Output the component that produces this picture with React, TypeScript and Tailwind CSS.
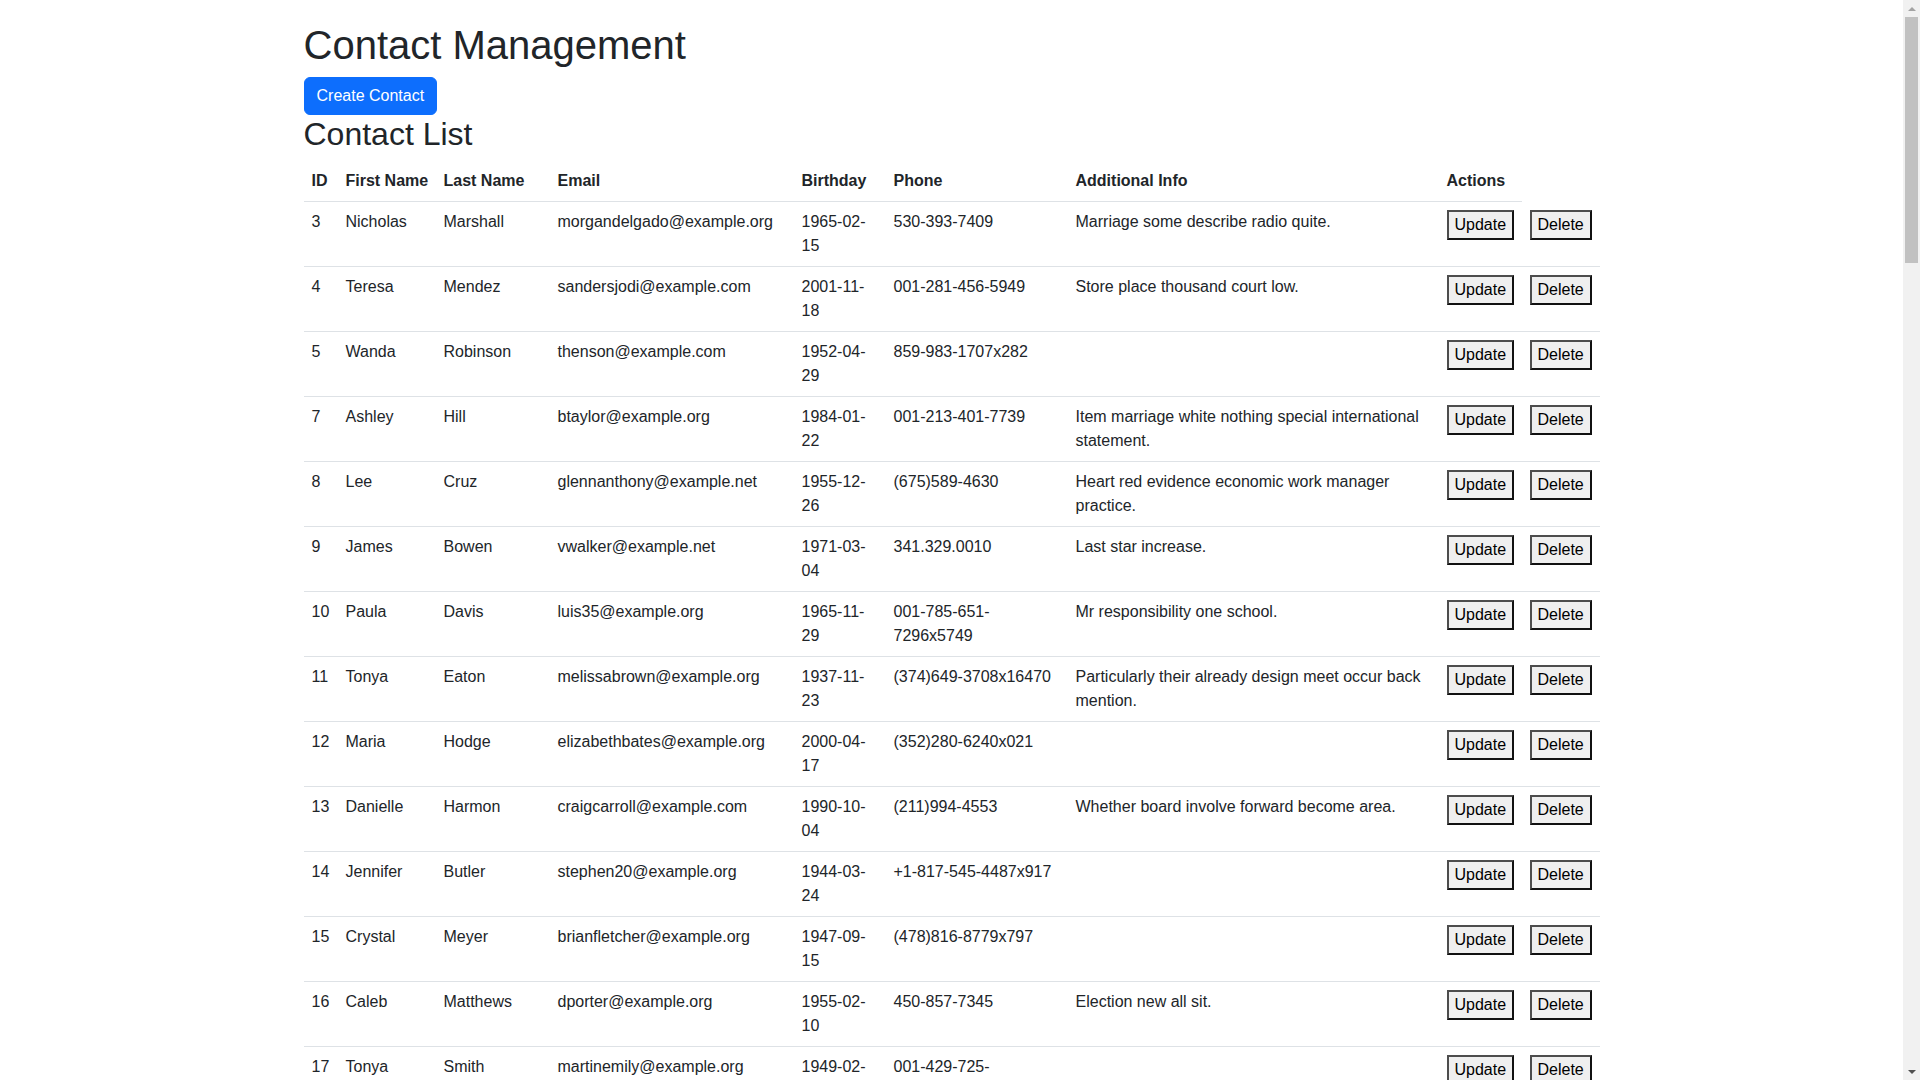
const contacts = [
  { id: 3, first: "Nicholas", last: "Marshall", email: "morgandelgado@example.org", birthday: "1965-02-15", phone: "530-393-7409", info: "Marriage some describe radio quite." },
  { id: 4, first: "Teresa", last: "Mendez", email: "sandersjodi@example.com", birthday: "2001-11-18", phone: "001-281-456-5949", info: "Store place thousand court low." },
  { id: 5, first: "Wanda", last: "Robinson", email: "thenson@example.com", birthday: "1952-04-29", phone: "859-983-1707x282", info: "" },
  { id: 7, first: "Ashley", last: "Hill", email: "btaylor@example.org", birthday: "1984-01-22", phone: "001-213-401-7739", info: "Item marriage white nothing special international statement." },
  { id: 8, first: "Lee", last: "Cruz", email: "glennanthony@example.net", birthday: "1955-12-26", phone: "(675)589-4630", info: "Heart red evidence economic work manager practice." },
  { id: 9, first: "James", last: "Bowen", email: "vwalker@example.net", birthday: "1971-03-04", phone: "341.329.0010", info: "Last star increase." },
  { id: 10, first: "Paula", last: "Davis", email: "luis35@example.org", birthday: "1965-11-29", phone: "001-785-651-7296x5749", info: "Mr responsibility one school." },
  { id: 11, first: "Tonya", last: "Eaton", email: "melissabrown@example.org", birthday: "1937-11-23", phone: "(374)649-3708x16470", info: "Particularly their already design meet occur back mention." },
  { id: 12, first: "Maria", last: "Hodge", email: "elizabethbates@example.org", birthday: "2000-04-17", phone: "(352)280-6240x021", info: "" },
  { id: 13, first: "Danielle", last: "Harmon", email: "craigcarroll@example.com", birthday: "1990-10-04", phone: "(211)994-4553", info: "Whether board involve forward become area." },
  { id: 14, first: "Jennifer", last: "Butler", email: "stephen20@example.org", birthday: "1944-03-24", phone: "+1-817-545-4487x917", info: "" },
  { id: 15, first: "Crystal", last: "Meyer", email: "brianfletcher@example.org", birthday: "1947-09-15", phone: "(478)816-8779x797", info: "" },
  { id: 16, first: "Caleb", last: "Matthews", email: "dporter@example.org", birthday: "1955-02-10", phone: "450-857-7345", info: "Election new all sit." },
  { id: 17, first: "Tonya", last: "Smith", email: "martinemily@example.org", birthday: "1949-02-08", phone: "001-429-725-8713x226", info: "" },
];

// more rows further down the page (below the fold)
const firsts = ["Kevin", "Laura", "Brian", "Megan", "Steven", "Amanda", "Gary", "Rachel", "Eric", "Kelly", "Scott", "Heather"];
const lasts = ["Young", "Price", "Foster", "Reed", "Ward", "Brooks", "Hayes", "Long", "Perry", "Ross", "Gray", "Bell"];
const infos = ["Quality figure tree.", "", "Early beat sense policy.", "", "Visit nature house among."];
for (let i = 0; i < 52; i++) {
  const f = firsts[i % firsts.length];
  const l = lasts[(i * 5) % lasts.length];
  contacts.push({
    id: 18 + i,
    first: f,
    last: l,
    email: `${f.toLowerCase()}${l.toLowerCase()}@example.com`,
    birthday: `19${50 + (i % 45)}-0${1 + (i % 9)}-1${i % 10}`,
    phone: `${300 + i * 7}-555-${1000 + i * 37}`,
    info: infos[i % infos.length],
  });
}

const headers = ["ID", "First Name", "Last Name", "Email", "Birthday", "Phone", "Additional Info", "Actions"];

function PlainButton({ label }: { label: string }) {
  return (
    <button className="bg-[#efefef] border-2 border-t-[#4d4d4d] border-l-[#4d4d4d] border-r-[#111] border-b-[#111] px-1.5 py-px leading-6 text-black">
      {label}
    </button>
  );
}

// window scrollbar as seen in the screenshot
function Scrollbar() {
  return (
    <div className="fixed right-0 top-0 flex h-screen w-[17px] flex-col items-center bg-[#f1f1f1]">
      <div className="flex h-[17px] w-full items-center justify-center">
        <div className="h-0 w-0 border-x-4 border-b-4 border-x-transparent border-b-[#a3a3a3]" />
      </div>
      <div className="h-[246px] w-[13px] bg-[#c1c1c1]" />
      <div className="flex-1" />
      <div className="flex h-[17px] w-full items-center justify-center">
        <div className="h-0 w-0 border-x-4 border-t-4 border-x-transparent border-t-[#505050]" />
      </div>
    </div>
  );
}

export default function App() {
  return (
    <div className="min-h-screen bg-white pr-[17px] text-[#212529] font-['Liberation_Sans',Arial,sans-serif] text-base leading-6">
      <div className="mx-auto w-[1320px] px-3 pt-[21px]">
        <h1 className="mb-2 text-[40px] leading-[48px] font-medium">Contact Management</h1>
        <button className="rounded-md border border-[#0d6efd] bg-[#0d6efd] px-3 py-1.5 leading-6 text-white">
          Create Contact
        </button>
        <h2 className="mb-2 text-[32px] leading-[38px] font-medium">Contact List</h2>

        <table className="mb-4 w-full table-fixed border-collapse align-top">
          <colgroup>
            <col className="w-[34px]" />
            <col className="w-[98px]" />
            <col className="w-[114px]" />
            <col className="w-[244px]" />
            <col className="w-[92px]" />
            <col className="w-[182px]" />
            <col className="w-[371px]" />
            <col className="w-[83px]" />
            <col />
          </colgroup>
          <thead className="align-bottom">
            <tr>
              {headers.map((h) => (
                <th key={h} className="whitespace-nowrap border-b border-[#dee2e6] p-2 text-left font-bold">
                  {h}
                </th>
              ))}
            </tr>
          </thead>
          <tbody>
            {contacts.map((c) => (
              <tr key={c.id}>
                <td className="border-b border-[#dee2e6] p-2 align-top">{c.id}</td>
                <td className="border-b border-[#dee2e6] p-2 align-top">{c.first}</td>
                <td className="border-b border-[#dee2e6] p-2 align-top">{c.last}</td>
                <td className="border-b border-[#dee2e6] p-2 align-top">{c.email}</td>
                <td className="border-b border-[#dee2e6] p-2 align-top">{c.birthday}</td>
                <td className="border-b border-[#dee2e6] p-2 align-top">{c.phone}</td>
                <td className="border-b border-[#dee2e6] p-2 align-top">{c.info}</td>
                <td className="border-b border-[#dee2e6] p-2 align-top">
                  <PlainButton label="Update" />
                </td>
                <td className="border-b border-[#dee2e6] p-2 align-top">
                  <PlainButton label="Delete" />
                </td>
              </tr>
            ))}
          </tbody>
        </table>
      </div>
      <Scrollbar />
    </div>
  );
}
